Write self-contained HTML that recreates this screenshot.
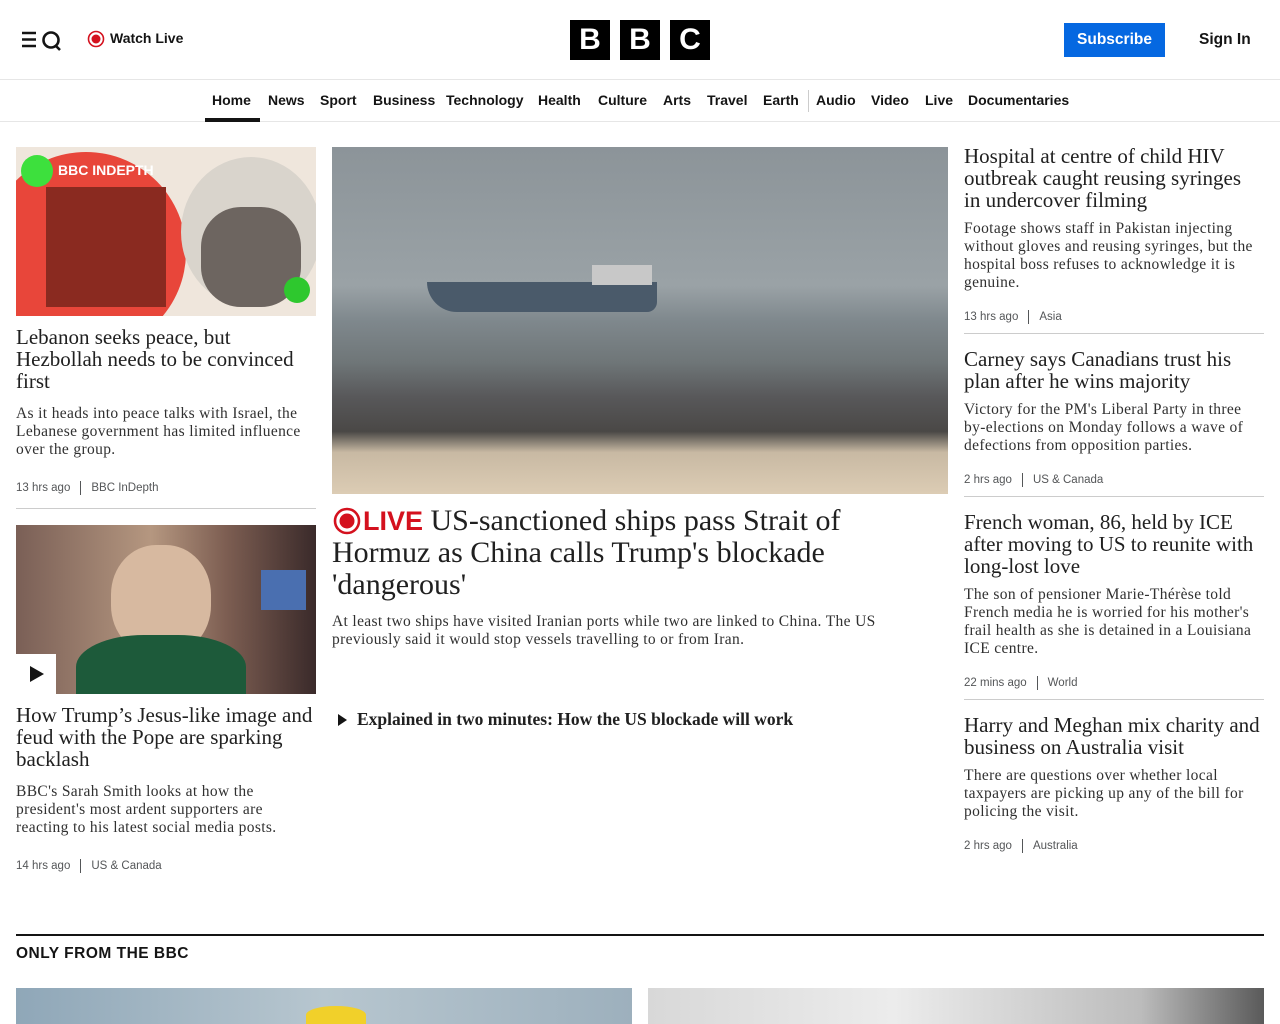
<!DOCTYPE html>
<html><head><meta charset="utf-8"><style>
*{margin:0;padding:0;box-sizing:border-box}
body{width:1280px;height:1024px;overflow:hidden;background:#fff;font-family:"Liberation Sans",sans-serif;color:#141414}
.hdr{height:80px;border-bottom:1px solid #e6e6e6;position:relative}
.nav{height:42px;border-bottom:1px solid #e6e6e6;position:relative}
.nav span{position:absolute;top:12px;font-size:14px;font-weight:bold;color:#141414}
.abs{position:absolute;white-space:nowrap}
.hl{font-family:"Liberation Serif",serif;font-size:21px;line-height:22px;color:#202020}
.sm{font-family:"Liberation Serif",serif;font-size:15.5px;line-height:18px;color:#303030;letter-spacing:0.35px}
.meta{font-size:11.5px;color:#545658;line-height:14px}
.meta i{display:inline-block;width:1px;height:14px;background:#545658;vertical-align:middle;margin:0 10px}
.sep{position:absolute;height:1px;background:#ccc}
</style></head><body>
<div class="hdr">
 <svg class="abs" style="left:22px;top:30px" width="40" height="22" viewBox="0 0 40 22"><path d="M0 3h14M0 9.5h14M0 16h14" stroke="#141414" stroke-width="2.4"/><circle cx="29" cy="10" r="7.5" fill="none" stroke="#141414" stroke-width="2.6"/><path d="M33 15l5 5" stroke="#141414" stroke-width="2.6"/></svg>
 <svg class="abs" style="left:87px;top:30px" width="18" height="18"><circle cx="9" cy="9" r="7.5" fill="none" stroke="#d4111e" stroke-width="1.6"/><circle cx="9" cy="9" r="4.5" fill="#d4111e"/></svg>
 <span class="abs" style="left:110px;top:30px;font-size:14px;font-weight:bold">Watch Live</span>
 <div class="abs" style="left:570px;top:20px;width:40px;height:40px;background:#000;color:#fff;font-weight:bold;font-size:30px;text-align:center;line-height:40px">B</div>
 <div class="abs" style="left:620px;top:20px;width:40px;height:40px;background:#000;color:#fff;font-weight:bold;font-size:30px;text-align:center;line-height:40px">B</div>
 <div class="abs" style="left:670px;top:20px;width:40px;height:40px;background:#000;color:#fff;font-weight:bold;font-size:30px;text-align:center;line-height:40px">C</div>
 <div class="abs" style="left:1064px;top:23px;width:101px;height:34px;background:#0568e1;color:#fff;font-weight:bold;font-size:15.5px;text-align:center;line-height:34px">Subscribe</div>
 <span class="abs" style="left:1199px;top:31px;font-size:15.5px;font-weight:bold">Sign In</span>
</div>
<div class="nav">
 <span style="left:212px">Home</span><div class="abs" style="left:205px;top:38px;width:55px;height:4px;background:#141414"></div>
 <span style="left:268px">News</span><span style="left:320px">Sport</span><span style="left:373px">Business</span><span style="left:446px">Technology</span><span style="left:538px">Health</span><span style="left:598px">Culture</span><span style="left:663px">Arts</span><span style="left:707px">Travel</span><span style="left:763px">Earth</span>
 <div class="abs" style="left:808px;top:10px;width:1px;height:22px;background:#ccc"></div>
 <span style="left:816px">Audio</span><span style="left:871px">Video</span><span style="left:925px">Live</span><span style="left:968px">Documentaries</span>
</div>

<!-- left column -->
<div class="abs" style="left:16px;top:147px;width:300px;height:169px;background:#efe6dc;overflow:hidden">
 <div class="abs" style="left:-30px;top:5px;width:200px;height:200px;border-radius:50%;background:#e8463a"></div>
 <div class="abs" style="left:30px;top:40px;width:120px;height:120px;background:#8a2a20"></div>
 <div class="abs" style="left:165px;top:10px;width:140px;height:150px;border-radius:50%;background:#d9d4cc"></div>
 <div class="abs" style="left:185px;top:60px;width:100px;height:100px;border-radius:40%;background:#6d6560"></div>
 <div class="abs" style="left:5px;top:8px;width:32px;height:32px;border-radius:50%;background:#3de03d"></div>
 <div class="abs" style="left:268px;top:130px;width:26px;height:26px;border-radius:50%;background:#2ec82e"></div>
 <span class="abs" style="left:42px;top:15px;color:#fff;font-weight:bold;font-size:14px">BBC INDEPTH</span>
</div>
<div class="abs hl" style="left:16px;top:326px">Lebanon seeks peace, but<br>Hezbollah needs to be convinced<br>first</div>
<div class="abs sm" style="left:16px;top:405px">As it heads into peace talks with Israel, the<br>Lebanese government has limited influence<br>over the group.</div>
<div class="abs meta" style="left:16px;top:481px">13 hrs ago<i></i>BBC InDepth</div>
<div class="sep" style="left:16px;top:508px;width:300px"></div>
<div class="abs" style="left:16px;top:525px;width:300px;height:169px;background:linear-gradient(90deg,#7a5f56,#b59780 45%,#7d5e52 70%,#3a2a2a);overflow:hidden">
 <div class="abs" style="left:95px;top:20px;width:100px;height:110px;border-radius:45%;background:#d7b9a0"></div>
 <div class="abs" style="left:60px;top:110px;width:170px;height:80px;border-radius:40% 40% 0 0;background:#1d5a3a"></div>
 <div class="abs" style="left:245px;top:45px;width:45px;height:40px;background:#4a6fb0"></div>
 <div class="abs" style="left:0;top:129px;width:40px;height:40px;background:#fff"></div>
 <svg class="abs" style="left:13px;top:140px" width="16" height="18"><path d="M1 1L15 9L1 17Z" fill="#141414"/></svg>
</div>
<div class="abs hl" style="left:16px;top:704px">How Trump’s Jesus-like image and<br>feud with the Pope are sparking<br>backlash</div>
<div class="abs sm" style="left:16px;top:783px">BBC's Sarah Smith looks at how the<br>president's most ardent supporters are<br>reacting to his latest social media posts.</div>
<div class="abs meta" style="left:16px;top:859px">14 hrs ago<i></i>US &amp; Canada</div>

<!-- center -->
<div class="abs" style="left:332px;top:147px;width:616px;height:347px;background:linear-gradient(#8c9499 0%,#9aa2a6 40%,#7f888d 50%,#6f7678 62%,#58585a 72%,#4a4846 82%,#c8b9a3 88%,#dcccb4 100%);overflow:hidden">
 <div class="abs" style="left:95px;top:135px;width:230px;height:30px;background:#4a5a6a;border-radius:0 0 10px 30px"></div>
 <div class="abs" style="left:260px;top:118px;width:60px;height:20px;background:#c8c8c8"></div>
</div>
<svg class="abs" style="left:333px;top:507px" width="28" height="28"><circle cx="14" cy="14" r="12" fill="none" stroke="#d4111e" stroke-width="2.6"/><circle cx="14" cy="14" r="7.5" fill="#d4111e"/></svg>
<div class="abs" style="left:332px;top:505px;font-family:'Liberation Serif',serif;font-size:30px;line-height:32px;color:#202020"><span style="padding-left:31px;color:#d4111e;font-family:'Liberation Sans',sans-serif;font-weight:bold;font-size:27px">LIVE</span> US-sanctioned ships pass Strait of<br>Hormuz as China calls Trump's blockade<br>'dangerous'</div>
<div class="abs sm" style="left:332px;top:613px">At least two ships have visited Iranian ports while two are linked to China. The US<br>previously said it would stop vessels travelling to or from Iran.</div>
<svg class="abs" style="left:338px;top:714px" width="10" height="12"><path d="M0 0L9 6L0 12Z" fill="#141414"/></svg>
<div class="abs" style="left:357px;top:709px;font-family:'Liberation Serif',serif;font-size:17.5px;font-weight:bold;color:#202020">Explained in two minutes: How the US blockade will work</div>

<!-- right -->
<div class="abs hl" style="left:964px;top:145px">Hospital at centre of child HIV<br>outbreak caught reusing syringes<br>in undercover filming</div>
<div class="abs sm" style="left:964px;top:220px">Footage shows staff in Pakistan injecting<br>without gloves and reusing syringes, but the<br>hospital boss refuses to acknowledge it is<br>genuine.</div>
<div class="abs meta" style="left:964px;top:310px">13 hrs ago<i></i>Asia</div>
<div class="sep" style="left:964px;top:333px;width:300px"></div>
<div class="abs hl" style="left:964px;top:348px">Carney says Canadians trust his<br>plan after he wins majority</div>
<div class="abs sm" style="left:964px;top:401px">Victory for the PM's Liberal Party in three<br>by-elections on Monday follows a wave of<br>defections from opposition parties.</div>
<div class="abs meta" style="left:964px;top:473px">2 hrs ago<i></i>US &amp; Canada</div>
<div class="sep" style="left:964px;top:496px;width:300px"></div>
<div class="abs hl" style="left:964px;top:511px">French woman, 86, held by ICE<br>after moving to US to reunite with<br>long-lost love</div>
<div class="abs sm" style="left:964px;top:586px">The son of pensioner Marie-Thérèse told<br>French media he is worried for his mother's<br>frail health as she is detained in a Louisiana<br>ICE centre.</div>
<div class="abs meta" style="left:964px;top:676px">22 mins ago<i></i>World</div>
<div class="sep" style="left:964px;top:699px;width:300px"></div>
<div class="abs hl" style="left:964px;top:714px">Harry and Meghan mix charity and<br>business on Australia visit</div>
<div class="abs sm" style="left:964px;top:767px">There are questions over whether local<br>taxpayers are picking up any of the bill for<br>policing the visit.</div>
<div class="abs meta" style="left:964px;top:839px">2 hrs ago<i></i>Australia</div>

<!-- bottom -->
<div class="abs" style="left:16px;top:934px;width:1248px;height:2px;background:#141414"></div>
<div class="abs" style="left:16px;top:945px;font-size:15.5px;font-weight:bold;letter-spacing:0.5px">ONLY FROM THE BBC</div>
<div class="abs" style="left:16px;top:988px;width:616px;height:36px;background:linear-gradient(90deg,#8fa7b8,#b7c6cf 50%,#9db0bd)"><div class="abs" style="left:290px;top:18px;width:60px;height:18px;background:#f1d02a;border-radius:50% 50% 0 0"></div></div>
<div class="abs" style="left:648px;top:988px;width:616px;height:36px;background:linear-gradient(90deg,#d8d8d8,#ececec 40%,#bcbcbc 80%,#5a5a5a)"></div>
</body></html>
